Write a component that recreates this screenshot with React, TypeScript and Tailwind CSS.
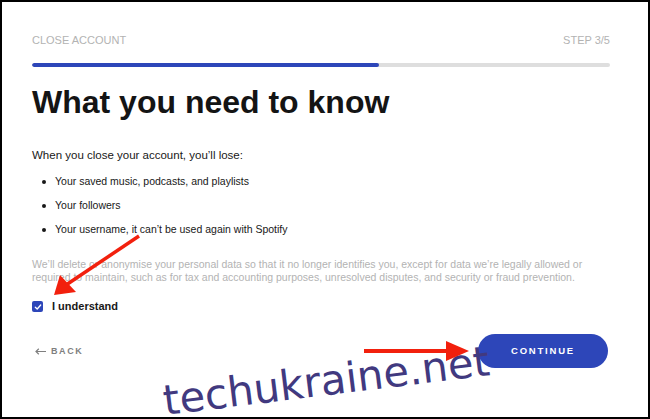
import React from "react";

export default function App() {
  return (
    <div
      className="relative w-[650px] h-[419px] box-border border-2 border-black bg-white overflow-hidden pl-[30px] pr-[38px] pt-[32px]"
      style={{ fontFamily: '"Liberation Sans", Arial, sans-serif' }}
    >
      <div className="flex justify-between text-[11px] leading-[13px] text-[#b3b3b3]">
        <span>CLOSE ACCOUNT</span>
        <span>STEP 3/5</span>
      </div>
      <div className="mt-[16px] h-[4px] rounded-full bg-[#dedede] overflow-hidden">
        <div className="h-full w-[60%] bg-[#2d46b9] rounded-full" />
      </div>
      <h1 className="mt-[19px] text-[32px] leading-[32px] font-bold text-[#141414]">
        What you need to know
      </h1>
      <p className="mt-[31px] text-[11.5px] leading-[13px] text-[#181818]">
        When you close your account, you’ll lose:
      </p>
      <ul className="mt-[13px] flex flex-col gap-[11px] text-[10.5px] leading-[13px] text-[#181818]">
        <li className="flex items-center">
          <span className="ml-[10px] mr-[9px] w-[4px] h-[4px] rounded-full bg-[#181818]" />
          Your saved music, podcasts, and playlists
        </li>
        <li className="flex items-center">
          <span className="ml-[10px] mr-[9px] w-[4px] h-[4px] rounded-full bg-[#181818]" />
          Your followers
        </li>
        <li className="flex items-center">
          <span className="ml-[10px] mr-[9px] w-[4px] h-[4px] rounded-full bg-[#181818]" />
          Your username, it can’t be used again with Spotify
        </li>
      </ul>
      <p className="mt-[22px] text-[10.5px] leading-[12.5px] text-[#b3b3b3] whitespace-nowrap">
        We’ll delete or anonymise your personal data so that it no longer identifies you, except for data we’re legally allowed or
        <br />
        required to maintain, such as for tax and accounting purposes, unresolved disputes, and security or fraud prevention.
      </p>
      <div className="mt-[17px] flex items-center gap-[9px]">
        <span className="w-[11px] h-[11px] rounded-[2px] bg-[#2d46b9] flex items-center justify-center">
          <svg width="8" height="8" viewBox="0 0 8 8">
            <path d="M1.3 4.2 L3.2 6 L6.7 2" fill="none" stroke="white" strokeWidth="1.3" strokeLinecap="round" strokeLinejoin="round" />
          </svg>
        </span>
        <span className="text-[11px] leading-[13px] font-bold text-[#181818]">I understand</span>
      </div>
      <div className="mt-[21px] flex items-center justify-between pr-[2px]">
        <div className="flex items-center gap-[5px] text-[9px] leading-[11px] font-bold tracking-[1.6px] text-[#7f7f7f] ml-[3px]">
          <svg width="11" height="7" viewBox="0 0 11 7">
            <path d="M11 3.5 H1 M3.8 0.8 L1 3.5 L3.8 6.2" fill="none" stroke="#7f7f7f" strokeWidth="1.2" />
          </svg>
          <span>BACK</span>
        </div>
        <button className="w-[130px] h-[34px] rounded-full bg-[#2d46b9] text-white text-[9.5px] font-bold tracking-[1.8px]">
          CONTINUE
        </button>
      </div>

      {/* watermark */}
      <div
        className="absolute left-[163px] top-[378px] whitespace-nowrap text-[41.5px] leading-[41px] text-[#41397f] origin-[0_35px] -rotate-[7deg]"
        style={{ fontFamily: '"DejaVu Sans", Verdana, sans-serif' }}
      >
        techukraine.net
      </div>

      {/* red arrows */}
      <svg className="absolute left-0 top-0 pointer-events-none" width="650" height="419">
        <line x1="137" y1="234" x2="64" y2="283" stroke="#f2200d" strokeWidth="3.5" />
        <polygon points="52,293 58,273 74,290" fill="#f2200d" />
        <line x1="362" y1="349" x2="448" y2="349" stroke="#f2200d" strokeWidth="4" />
        <polygon points="444,339 467,349 444,359" fill="#f2200d" />
      </svg>
    </div>
  );
}
